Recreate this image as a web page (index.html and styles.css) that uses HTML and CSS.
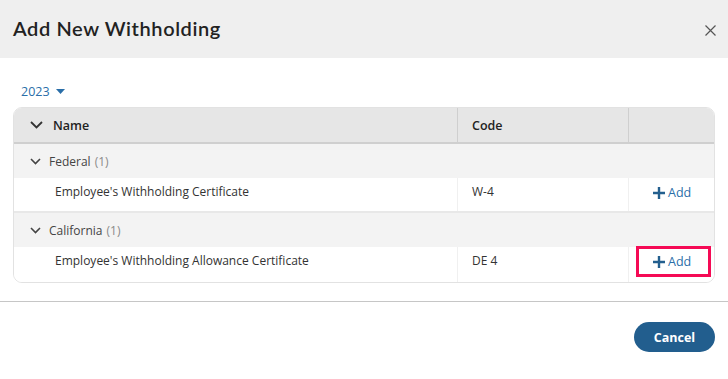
FILE: index.html
```html
<!DOCTYPE html>
<html lang="en">
<head>
    <meta charset="UTF-8">
    <title>Add New Withholding</title>
    <link rel="stylesheet" href="styles.css">
</head>
<body>
    <div class="modal">
        <header class="modal-header">
            <h1>Add New Withholding</h1>
            <button class="close-btn" aria-label="Close">
                <svg width="11" height="11" viewBox="0 0 11 11"><path d="M0.5 0.5 L10.5 10.5 M10.5 0.5 L0.5 10.5" stroke="#555" stroke-width="1.2" fill="none"/></svg>
            </button>
        </header>

        <div class="modal-body">
            <div class="year-select">
                2023
                <svg width="9" height="5" viewBox="0 0 9 5"><path d="M0 0 H9 L4.5 5 Z" fill="#2a6ea8"/></svg>
            </div>

            <div class="grid">
                <div class="row head">
                    <div class="cell name">
                        <svg class="chev" width="13" height="8" viewBox="0 0 13 8"><path d="M1 1 L6.5 6.5 L12 1" stroke="#333" stroke-width="1.8" fill="none"/></svg>
                        Name
                    </div>
                    <div class="cell code">Code</div>
                    <div class="cell action"></div>
                </div>

                <!-- Federal -->
                <div class="row group">
                    <div class="group-label">
                        <svg class="chev small" width="11" height="7" viewBox="0 0 11 7"><path d="M1 1 L5.5 5.5 L10 1" stroke="#444" stroke-width="1.6" fill="none"/></svg>
                        Federal <span class="count">(1)</span>
                    </div>
                </div>
                <div class="row item">
                    <div class="cell name">Employee's Withholding Certificate</div>
                    <div class="cell code">W-4</div>
                    <div class="cell action">
                        <a class="add-link" href="#">
                            <svg class="plus" width="12" height="12" viewBox="0 0 12 12"><path d="M6 0 V12 M0 6 H12" stroke="#235f8e" stroke-width="2.4"/></svg>
                            Add
                        </a>
                    </div>
                </div>

                <!-- California -->
                <div class="row group">
                    <div class="group-label">
                        <svg class="chev small" width="11" height="7" viewBox="0 0 11 7"><path d="M1 1 L5.5 5.5 L10 1" stroke="#444" stroke-width="1.6" fill="none"/></svg>
                        California <span class="count">(1)</span>
                    </div>
                </div>
                <div class="row item last">
                    <div class="cell name">Employee's Withholding Allowance Certificate</div>
                    <div class="cell code">DE 4</div>
                    <div class="cell action">
                        <a class="add-link highlight" href="#">
                            <svg class="plus" width="12" height="12" viewBox="0 0 12 12"><path d="M6 0 V12 M0 6 H12" stroke="#235f8e" stroke-width="2.4"/></svg>
                            Add
                        </a>
                    </div>
                </div>
            </div>
        </div>

        <footer class="modal-footer">
            <button class="btn-cancel">Cancel</button>
        </footer>
    </div>
</body>
</html>
```

FILE: styles.css
```css
* {
    margin: 0;
    padding: 0;
    box-sizing: border-box;
}

body {
    background: #fff;
    font-family: 'Open Sans', 'Noto Sans', sans-serif;
    color: #333;
    font-size: 12px;
}

.modal {
    width: 728px;
    height: 379px;
}

.modal-header {
    height: 58px;
    background: #efefef;
    display: flex;
    align-items: center;
    justify-content: space-between;
    padding: 0 12px 0 13px;
}

.modal-header h1 {
    font-family: 'Lato', sans-serif;
    font-weight: 600;
    font-size: 20px;
    color: #222;
    letter-spacing: 0.6px;
    margin-top: -2px;
}

.close-btn {
    background: none;
    border: none;
    width: 11px;
    height: 11px;
    display: flex;
    margin-top: 2px;
}

.modal-body {
    padding: 24px 13px 0 13px;
    height: 244px;
    border-bottom: 1px solid #c6c6c6;
}

.year-select {
    color: #2a6ea8;
    font-size: 12.5px;
    display: flex;
    align-items: center;
    gap: 6px;
    padding-left: 8px;
    height: 18px;
    margin-bottom: 7px;
}

.grid {
    border: 1px solid #e2e2e2;
    border-radius: 9px;
    overflow: hidden;
}

.row {
    display: grid;
    grid-template-columns: 443px 171px 1fr;
}

.cell {
    display: flex;
    align-items: center;
}

.row.head {
    background: #e6e6e6;
    height: 36px;
    border-bottom: 2px solid #cfcfcf;
    font-weight: 600;
    font-size: 12.5px;
    color: #222;
}

.row.head .cell + .cell {
    border-left: 1px solid #cfcfcf;
}

.row.head .name {
    padding-left: 16px;
}

.chev {
    margin-right: 10px;
}

.row.head .code {
    padding-left: 14px;
}

.row.group {
    display: flex;
    background: #f3f3f3;
    height: 34px;
    align-items: center;
}

.group-label {
    padding-left: 16px;
    display: flex;
    align-items: center;
    color: #444;
}

.chev.small {
    margin-right: 8px;
}

.count {
    color: #8a8a8a;
    margin-left: 4px;
}

.row.item {
    height: 35px;
    background: #fff;
    border-bottom: 2px solid #e8e8e8;
}

.row.item.last {
    border-bottom: none;
}

.row.item .cell {
    align-items: flex-start;
    padding-top: 5px;
}

.row.item .cell + .cell {
    border-left: 1px solid #f0f0f0;
}

.row.item .name {
    padding-left: 41px;
}

.row.item .code {
    padding-left: 14px;
}

.row.item .action {
    padding-left: 7px;
    padding-top: 0;
}

.add-link {
    display: flex;
    align-items: center;
    gap: 3px;
    color: #2a6ea8;
    font-size: 12.5px;
    text-decoration: none;
    width: 75px;
    height: 31px;
    padding-left: 14px;
    margin-top: -1px;
    border: 3px solid transparent;
}

.add-link.highlight {
    border-color: #f50a55;
}

.modal-footer {
    display: flex;
    justify-content: flex-end;
    padding: 20px 13px 0 0;
}

.btn-cancel {
    background: #225e8e;
    color: #fff;
    border: none;
    border-radius: 16px;
    width: 81px;
    height: 30px;
    font-family: 'Open Sans', sans-serif;
    font-weight: 700;
    font-size: 12.5px;
}
```
